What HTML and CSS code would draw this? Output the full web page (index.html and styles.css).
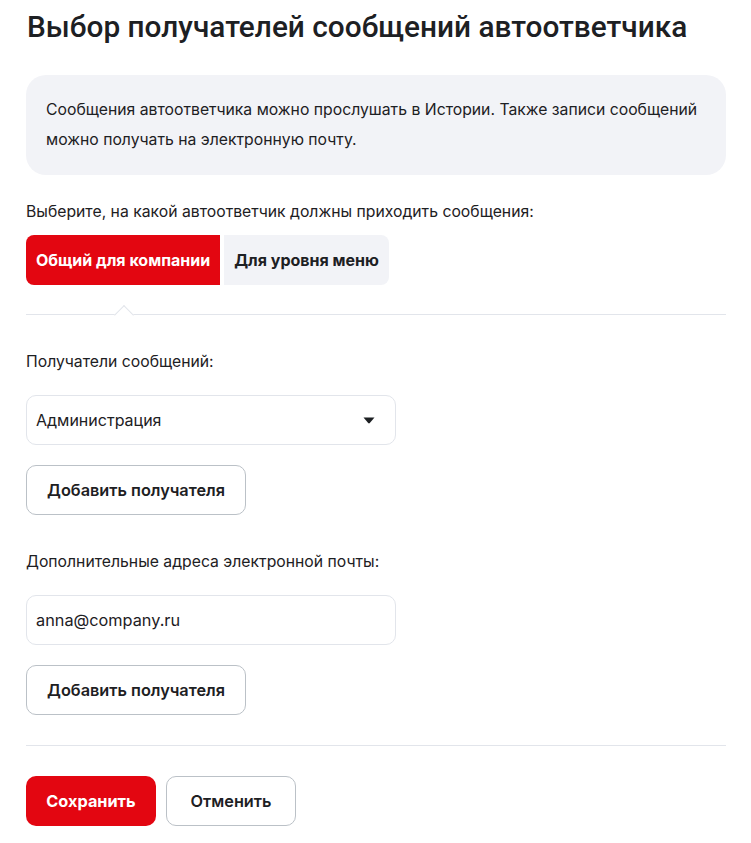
FILE: index.html
```html
<!DOCTYPE html>
<html lang="ru">
<head>
<meta charset="utf-8">
<title>Выбор получателей сообщений автоответчика</title>
<link rel="stylesheet" href="styles.css">
</head>
<body>
<main class="page">
  <h1 class="title">Выбор получателей сообщений автоответчика</h1>
  <div class="info">Сообщения автоответчика можно прослушать в Истории. Также записи сообщений можно получать на электронную почту.</div>
  <p class="label label-first">Выберите, на какой автоответчик должны приходить сообщения:</p>
  <div class="segmented">
    <button class="seg seg-active">Общий для компании</button>
    <button class="seg">Для уровня меню</button>
  </div>
  <div class="divider divider-tabs"><span class="notch"></span></div>
  <p class="label label-section">Получатели сообщений:</p>
  <div class="select">
    <span>Администрация</span>
    <svg class="caret" width="12" height="7" viewBox="0 0 12 7"><path d="M0.5 0.5 H11.5 L6.8 6 Q6 6.8 5.2 6 Z" fill="#1d2023"/></svg>
  </div>
  <button class="btn btn-outline">Добавить получателя</button>
  <p class="label label-section">Дополнительные адреса электронной почты:</p>
  <div class="field">anna@company.ru</div>
  <button class="btn btn-outline">Добавить получателя</button>
  <div class="divider divider-bottom"></div>
  <div class="actions">
    <button class="btn btn-primary">Сохранить</button>
    <button class="btn btn-outline btn-cancel">Отменить</button>
  </div>
</main>
</body>
</html>
```
FILE: styles.css
```css
* { box-sizing: border-box; }
body {
  margin: 0;
  background: #fff;
  color: #1d2023;
  font-family: Inter, "Noto Sans", sans-serif;
}
.page {
  width: 751px;
  padding: 8px 25px 0 26px;
  display: flex;
  flex-direction: column;
  align-items: flex-start;
}
.title {
  margin: 0;
  font-family: Roboto, "Noto Sans", sans-serif;
  font-weight: 500;
  font-size: 29.8px;
  line-height: 38px;
  letter-spacing: 0;
  padding-left: 1px;
}
.info {
  margin-top: 29px;
  width: 700px;
  background: #f2f3f7;
  border-radius: 20px;
  padding: 20px 20px;
  font-size: 15.75px;
  line-height: 30px;
}
.label {
  margin: 0;
  font-size: 15.75px;
  line-height: 24px;
}
.label-first { margin-top: 25px; }
.label-section { margin-top: 35px; }
.segmented {
  margin-top: 11px;
  display: flex;
  gap: 4px;
}
.seg {
  height: 50px;
  border: 0;
  margin: 0;
  font-family: Inter, "Noto Sans", sans-serif;
  font-size: 16px;
  font-weight: 700;
  color: #1d2023;
  background: #f2f3f7;
  padding: 0 10px;
  border-radius: 0 8px 8px 0;
}
.seg-active {
  background: #e30611;
  color: #fff;
  border-radius: 8px 0 0 8px;
}
.divider {
  width: 700px;
  height: 1px;
  background: #e2e5eb;
  position: relative;
}
.divider-tabs { margin-top: 29px; }
.notch {
  position: absolute;
  left: 91px;
  top: -6px;
  width: 14px;
  height: 14px;
  background: #fff;
  border-left: 1px solid #e2e5eb;
  border-top: 1px solid #e2e5eb;
  transform: rotate(45deg);
}
.divider-bottom { margin-top: 30px; }
.select, .field {
  margin-top: 21px;
  width: 370px;
  height: 50px;
  border: 1px solid #e2e5eb;
  border-radius: 10px;
  display: flex;
  align-items: center;
  justify-content: space-between;
  padding: 0 20px 0 9px;
  font-size: 16px;
}
.field { font-size: 16.3px; }
.caret { display: block; margin-top: 1px; }
.btn {
  margin-top: 20px;
  height: 50px;
  border-radius: 10px;
  font-family: Inter, "Noto Sans", sans-serif;
  font-size: 16.3px;
  font-weight: 600;
  padding: 0 10px;
  cursor: pointer;
}
.btn-outline {
  background: #fff;
  border: 1px solid #bbc1c7;
  color: #1d2023;
  width: 220px;
}
.actions {
  margin-top: 30px;
  display: flex;
  gap: 10px;
}
.actions .btn { margin-top: 0; width: 130px; }
.btn-primary {
  background: #e30611;
  border: 0;
  color: #fff;
  font-weight: 700;
}
```
